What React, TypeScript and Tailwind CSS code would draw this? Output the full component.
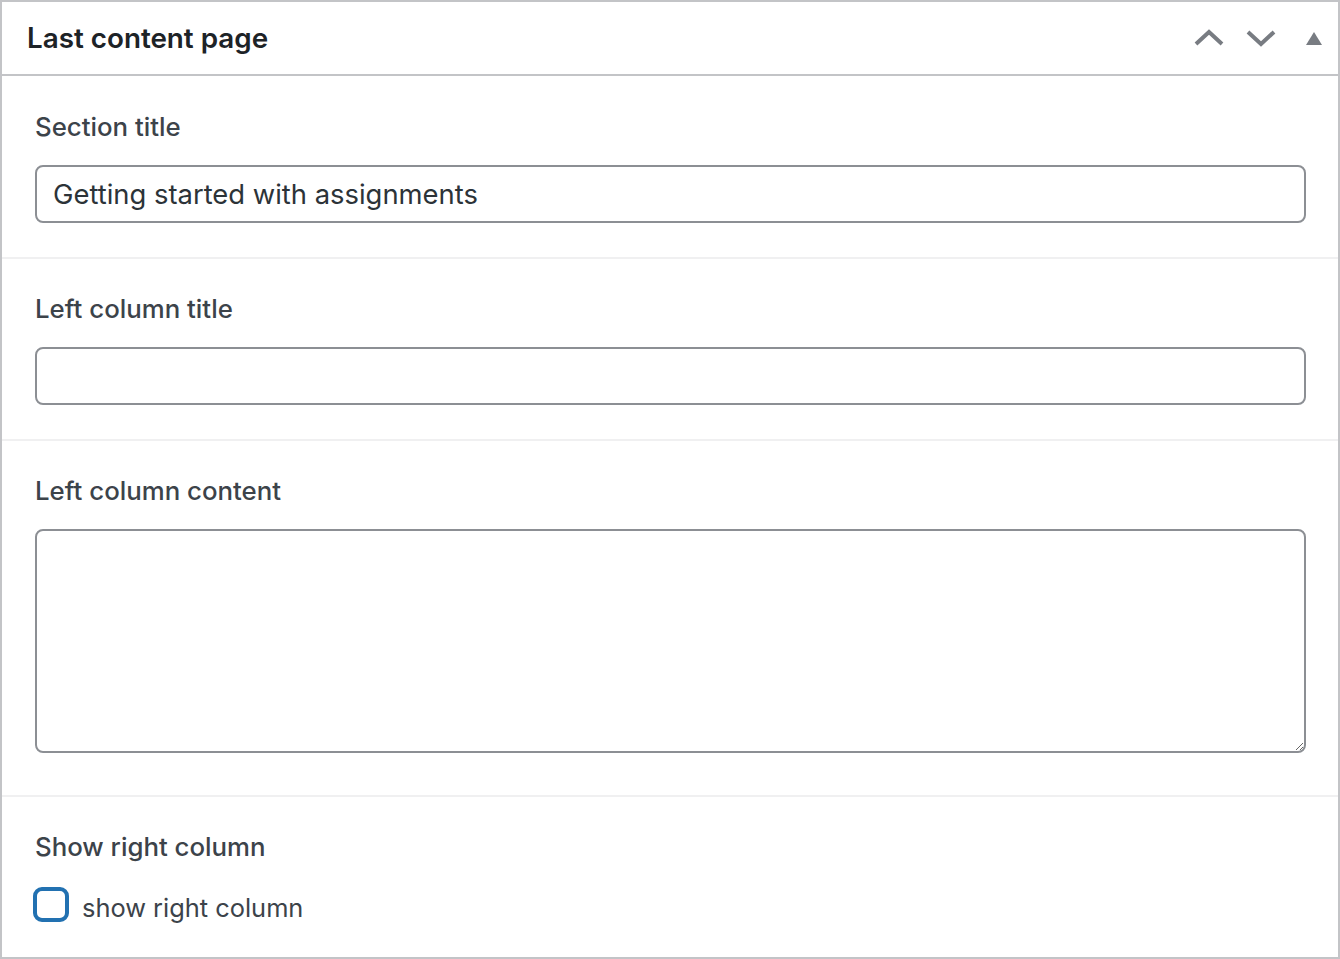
import React from "react";

const font = { fontFamily: "Inter, 'Noto Sans', sans-serif" };

function Label({ children }: { children: React.ReactNode }) {
  return (
    <div className="text-[25.8px] leading-[28px] font-medium text-[#3c434a]">{children}</div>
  );
}

export default function App() {
  return (
    <div style={font} className="w-[1340px] h-[959px] bg-white border-2 border-[#c3c4c7] flex flex-col">
      <div className="h-[74px] shrink-0 border-b-2 border-[#c3c4c7] flex items-center pl-[25px] pr-[16px]">
        <h2 className="flex-1 text-[27.8px] font-semibold text-[#1d2327] leading-none pt-[2px]">Last content page</h2>
        <div className="flex items-center">
          <svg width="30" height="18" viewBox="0 0 30 18" className="mr-[22px]">
            <path d="M2 15 L15 3 L28 15" fill="none" stroke="#787c82" strokeWidth="4" />
          </svg>
          <svg width="30" height="18" viewBox="0 0 30 18" className="mr-[30px]">
            <path d="M2 3 L15 15 L28 3" fill="none" stroke="#787c82" strokeWidth="4" />
          </svg>
          <svg width="16" height="13" viewBox="0 0 16 13">
            <path d="M8 0 L16 13 L0 13 Z" fill="#787c82" />
          </svg>
        </div>
      </div>

      <div className="pt-[37px] pb-[34px] pl-[33px] pr-[32px]">
        <Label>Section title</Label>
        <input
          type="text"
          defaultValue="Getting started with assignments"
          className="mt-[24px] block w-full h-[58px] border-2 border-[#8c8f94] rounded-[8px] px-[16px] text-[27.4px] text-[#2c3338] outline-none"
          style={font}
        />
      </div>

      <div className="border-t-2 border-[#f0f0f1] pt-[36px] pb-[34px] pl-[33px] pr-[32px]">
        <Label>Left column title</Label>
        <input
          type="text"
          className="mt-[24px] block w-full h-[58px] border-2 border-[#8c8f94] rounded-[8px] px-[16px] text-[27.4px] text-[#2c3338] outline-none"
          style={font}
        />
      </div>

      <div className="border-t-2 border-[#f0f0f1] pt-[36px] pb-[42px] pl-[33px] pr-[32px]">
        <Label>Left column content</Label>
        <textarea
          className="mt-[24px] block w-full h-[224px] border-2 border-[#8c8f94] rounded-[8px] px-[16px] text-[27.4px] text-[#2c3338] outline-none"
          style={font}
        />
      </div>

      <div className="border-t-2 border-[#f0f0f1] pt-[36px] pl-[31px] pr-[32px]">
        <div className="pl-[2px]">
          <Label>Show right column</Label>
        </div>
        <label className="mt-[25px] flex items-center h-[36px]">
          <span className="w-[36px] h-[35px] border-[4px] border-[#2271b1] rounded-[9px] box-border shrink-0" />
          <span className="ml-[13px] text-[25.4px] text-[#3c434a] leading-none pt-[8px]">show right column</span>
        </label>
      </div>
    </div>
  );
}
